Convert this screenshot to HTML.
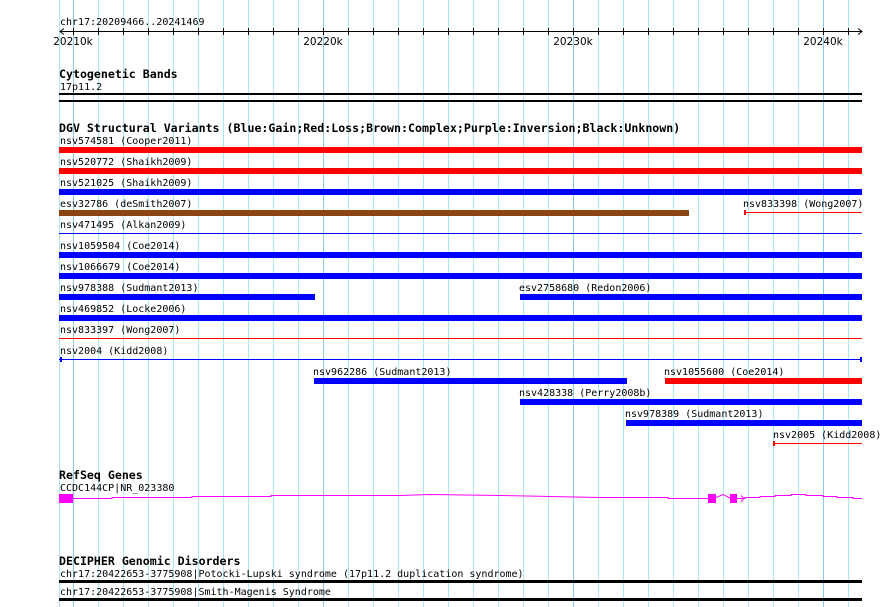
<!DOCTYPE html>
<html><head><meta charset="utf-8"><style>
html,body{margin:0;padding:0;background:#fff;width:890px;height:607px;overflow:hidden}
svg{display:block}
.m{font-family:"DejaVu Sans Mono","Liberation Mono",monospace;font-size:10px;fill:#000}
.b{font-family:"DejaVu Sans Mono","Liberation Mono",monospace;font-size:11.6px;font-weight:bold;fill:#000}
.s{font-family:"DejaVu Sans","Liberation Sans",sans-serif;font-size:10.5px;fill:#000}
</style></head><body>
<svg width="890" height="607" xmlns="http://www.w3.org/2000/svg">
<g id="grid" stroke-width="1">
<line x1="59.5" y1="0" x2="59.5" y2="607" stroke="#aee8ee"/>
<line x1="73.5" y1="0" x2="73.5" y2="607" stroke="#8ec8e6"/>
<line x1="98.5" y1="0" x2="98.5" y2="607" stroke="#aee8ee"/>
<line x1="123.5" y1="0" x2="123.5" y2="607" stroke="#aee8ee"/>
<line x1="148.5" y1="0" x2="148.5" y2="607" stroke="#aee8ee"/>
<line x1="173.5" y1="0" x2="173.5" y2="607" stroke="#aee8ee"/>
<line x1="198.5" y1="0" x2="198.5" y2="607" stroke="#aee8ee"/>
<line x1="223.5" y1="0" x2="223.5" y2="607" stroke="#aee8ee"/>
<line x1="248.5" y1="0" x2="248.5" y2="607" stroke="#aee8ee"/>
<line x1="273.5" y1="0" x2="273.5" y2="607" stroke="#aee8ee"/>
<line x1="298.5" y1="0" x2="298.5" y2="607" stroke="#aee8ee"/>
<line x1="323.5" y1="0" x2="323.5" y2="607" stroke="#8ec8e6"/>
<line x1="348.5" y1="0" x2="348.5" y2="607" stroke="#aee8ee"/>
<line x1="373.5" y1="0" x2="373.5" y2="607" stroke="#aee8ee"/>
<line x1="398.5" y1="0" x2="398.5" y2="607" stroke="#aee8ee"/>
<line x1="423.5" y1="0" x2="423.5" y2="607" stroke="#aee8ee"/>
<line x1="448.5" y1="0" x2="448.5" y2="607" stroke="#aee8ee"/>
<line x1="473.5" y1="0" x2="473.5" y2="607" stroke="#aee8ee"/>
<line x1="498.5" y1="0" x2="498.5" y2="607" stroke="#aee8ee"/>
<line x1="523.5" y1="0" x2="523.5" y2="607" stroke="#aee8ee"/>
<line x1="548.5" y1="0" x2="548.5" y2="607" stroke="#aee8ee"/>
<line x1="573.5" y1="0" x2="573.5" y2="607" stroke="#8ec8e6"/>
<line x1="598.5" y1="0" x2="598.5" y2="607" stroke="#aee8ee"/>
<line x1="623.5" y1="0" x2="623.5" y2="607" stroke="#aee8ee"/>
<line x1="648.5" y1="0" x2="648.5" y2="607" stroke="#aee8ee"/>
<line x1="673.5" y1="0" x2="673.5" y2="607" stroke="#aee8ee"/>
<line x1="698.5" y1="0" x2="698.5" y2="607" stroke="#aee8ee"/>
<line x1="723.5" y1="0" x2="723.5" y2="607" stroke="#aee8ee"/>
<line x1="748.5" y1="0" x2="748.5" y2="607" stroke="#aee8ee"/>
<line x1="773.5" y1="0" x2="773.5" y2="607" stroke="#aee8ee"/>
<line x1="798.5" y1="0" x2="798.5" y2="607" stroke="#aee8ee"/>
<line x1="823.5" y1="0" x2="823.5" y2="607" stroke="#8ec8e6"/>
<line x1="848.5" y1="0" x2="848.5" y2="607" stroke="#aee8ee"/>
</g>
<text class="m" x="60" y="25">chr17:20209466..20241469</text>
<line x1="60" y1="31.5" x2="862" y2="31.5" stroke="#000"/>
<path d="M64 28.5 L60 31.5 L64 34.5 M858 28.5 L862 31.5 L858 34.5" fill="none" stroke="#000"/>
<g stroke="#000">
<path d="M73.5 28v7M98.5 28v7M123.5 28v7M148.5 28v7M173.5 28v7M198.5 28v7M223.5 28v7M248.5 28v7M273.5 28v7M298.5 28v7M323.5 28v7M348.5 28v7M373.5 28v7M398.5 28v7M423.5 28v7M448.5 28v7M473.5 28v7M498.5 28v7M523.5 28v7M548.5 28v7M573.5 28v7M598.5 28v7M623.5 28v7M648.5 28v7M673.5 28v7M698.5 28v7M723.5 28v7M748.5 28v7M773.5 28v7M798.5 28v7M823.5 28v7M848.5 28v7"/>
</g>
<text class="s" x="73" y="45" text-anchor="middle">20210k</text>
<text class="s" x="323" y="45" text-anchor="middle">20220k</text>
<text class="s" x="573" y="45" text-anchor="middle">20230k</text>
<text class="s" x="823" y="45" text-anchor="middle">20240k</text>
<text class="b" x="59" y="78">Cytogenetic Bands</text>
<text class="m" x="60" y="90">17p11.2</text>
<rect x="59" y="93" width="803" height="2" fill="#000"/>
<rect x="59" y="100" width="803" height="2" fill="#000"/>
<text class="b" x="59" y="132">DGV Structural Variants (Blue:Gain;Red:Loss;Brown:Complex;Purple:Inversion;Black:Unknown)</text>
<text class="m" x="60" y="144">nsv574581 (Cooper2011)</text>
<rect x="59" y="147" width="803" height="6" fill="#f00"/>
<text class="m" x="60" y="165">nsv520772 (Shaikh2009)</text>
<rect x="59" y="168" width="803" height="6" fill="#f00"/>
<text class="m" x="60" y="186">nsv521025 (Shaikh2009)</text>
<rect x="59" y="189" width="803" height="6" fill="#00f"/>
<text class="m" x="60" y="207">esv32786 (deSmith2007)</text>
<rect x="59" y="210" width="630" height="6" fill="#8b4513"/>
<text class="m" x="743" y="207">nsv833398 (Wong2007)</text>
<rect x="745" y="212" width="117" height="1" fill="#f00"/>
<rect x="744" y="210" width="2" height="5" fill="#f00"/>
<text class="m" x="60" y="228">nsv471495 (Alkan2009)</text>
<rect x="59" y="233" width="803" height="1" fill="#00f"/>
<text class="m" x="60" y="249">nsv1059504 (Coe2014)</text>
<rect x="59" y="252" width="803" height="6" fill="#00f"/>
<text class="m" x="60" y="270">nsv1066679 (Coe2014)</text>
<rect x="59" y="273" width="803" height="6" fill="#00f"/>
<text class="m" x="60" y="291">nsv978388 (Sudmant2013)</text>
<rect x="59" y="294" width="256" height="6" fill="#00f"/>
<text class="m" x="519" y="291">esv2758680 (Redon2006)</text>
<rect x="520" y="294" width="342" height="6" fill="#00f"/>
<text class="m" x="60" y="312">nsv469852 (Locke2006)</text>
<rect x="59" y="315" width="803" height="6" fill="#00f"/>
<text class="m" x="60" y="333">nsv833397 (Wong2007)</text>
<rect x="59" y="338" width="803" height="1" fill="#f00"/>
<text class="m" x="60" y="354">nsv2004 (Kidd2008)</text>
<rect x="59" y="359" width="803" height="1" fill="#00f"/>
<rect x="60" y="357" width="2" height="5" fill="#00f"/>
<rect x="860" y="357" width="2" height="5" fill="#00f"/>
<text class="m" x="313" y="375">nsv962286 (Sudmant2013)</text>
<rect x="314" y="378" width="313" height="6" fill="#00f"/>
<text class="m" x="664" y="375">nsv1055600 (Coe2014)</text>
<rect x="665" y="378" width="197" height="6" fill="#f00"/>
<text class="m" x="519" y="396">nsv428338 (Perry2008b)</text>
<rect x="520" y="399" width="342" height="6" fill="#00f"/>
<text class="m" x="625" y="417">nsv978389 (Sudmant2013)</text>
<rect x="626" y="420" width="236" height="6" fill="#00f"/>
<text class="m" x="773" y="438">nsv2005 (Kidd2008)</text>
<rect x="774" y="443" width="88" height="1" fill="#f00"/>
<rect x="773" y="441" width="2" height="5" fill="#f00"/>
<text class="b" x="59" y="479">RefSeq Genes</text>
<text class="m" x="60" y="491">CCDC144CP|NR_023380</text>
<rect x="59" y="494" width="14" height="9" fill="#f0f"/>
<polyline fill="none" stroke="#f0f" stroke-width="1" points="73,498.5 112,498.5 112,497.5 192,497.5 192,496.5 271,496.5 271,495.5 400,495.5 430,494.5 500,495.5 600,497.5 668,497.5 668,498.5 708,498.5"/>
<rect x="708" y="494" width="8" height="9" fill="#f0f"/>
<polyline fill="none" stroke="#f0f" points="716,497.5 723,494.5 730,498"/>
<rect x="730" y="494" width="7" height="9" fill="#f0f"/>
<polyline fill="none" stroke="#f0f" points="737,498.5 745,498.5 745,497.5 760,497.5 760,496.5 775,496.5 775,495.5 791,495.5 791,494.5 806,494.5 806,495.5 823,495.5 823,496.5 837,496.5 837,497.5 853,497.5 853,498.5 862,498.5"/>
<path d="M741 495.5 L744 498.5 L741 501.5" fill="none" stroke="#f0f"/>
<text class="b" x="59" y="565">DECIPHER Genomic Disorders</text>
<text class="m" x="60" y="577">chr17:20422653-3775908|Potocki-Lupski syndrome (17p11.2 duplication syndrome)</text>
<rect x="59" y="580" width="803" height="3" fill="#000"/>
<text class="m" x="60" y="595">chr17:20422653-3775908|Smith-Magenis Syndrome</text>
<rect x="59" y="598" width="803" height="3" fill="#000"/>
</svg>
</body></html>
